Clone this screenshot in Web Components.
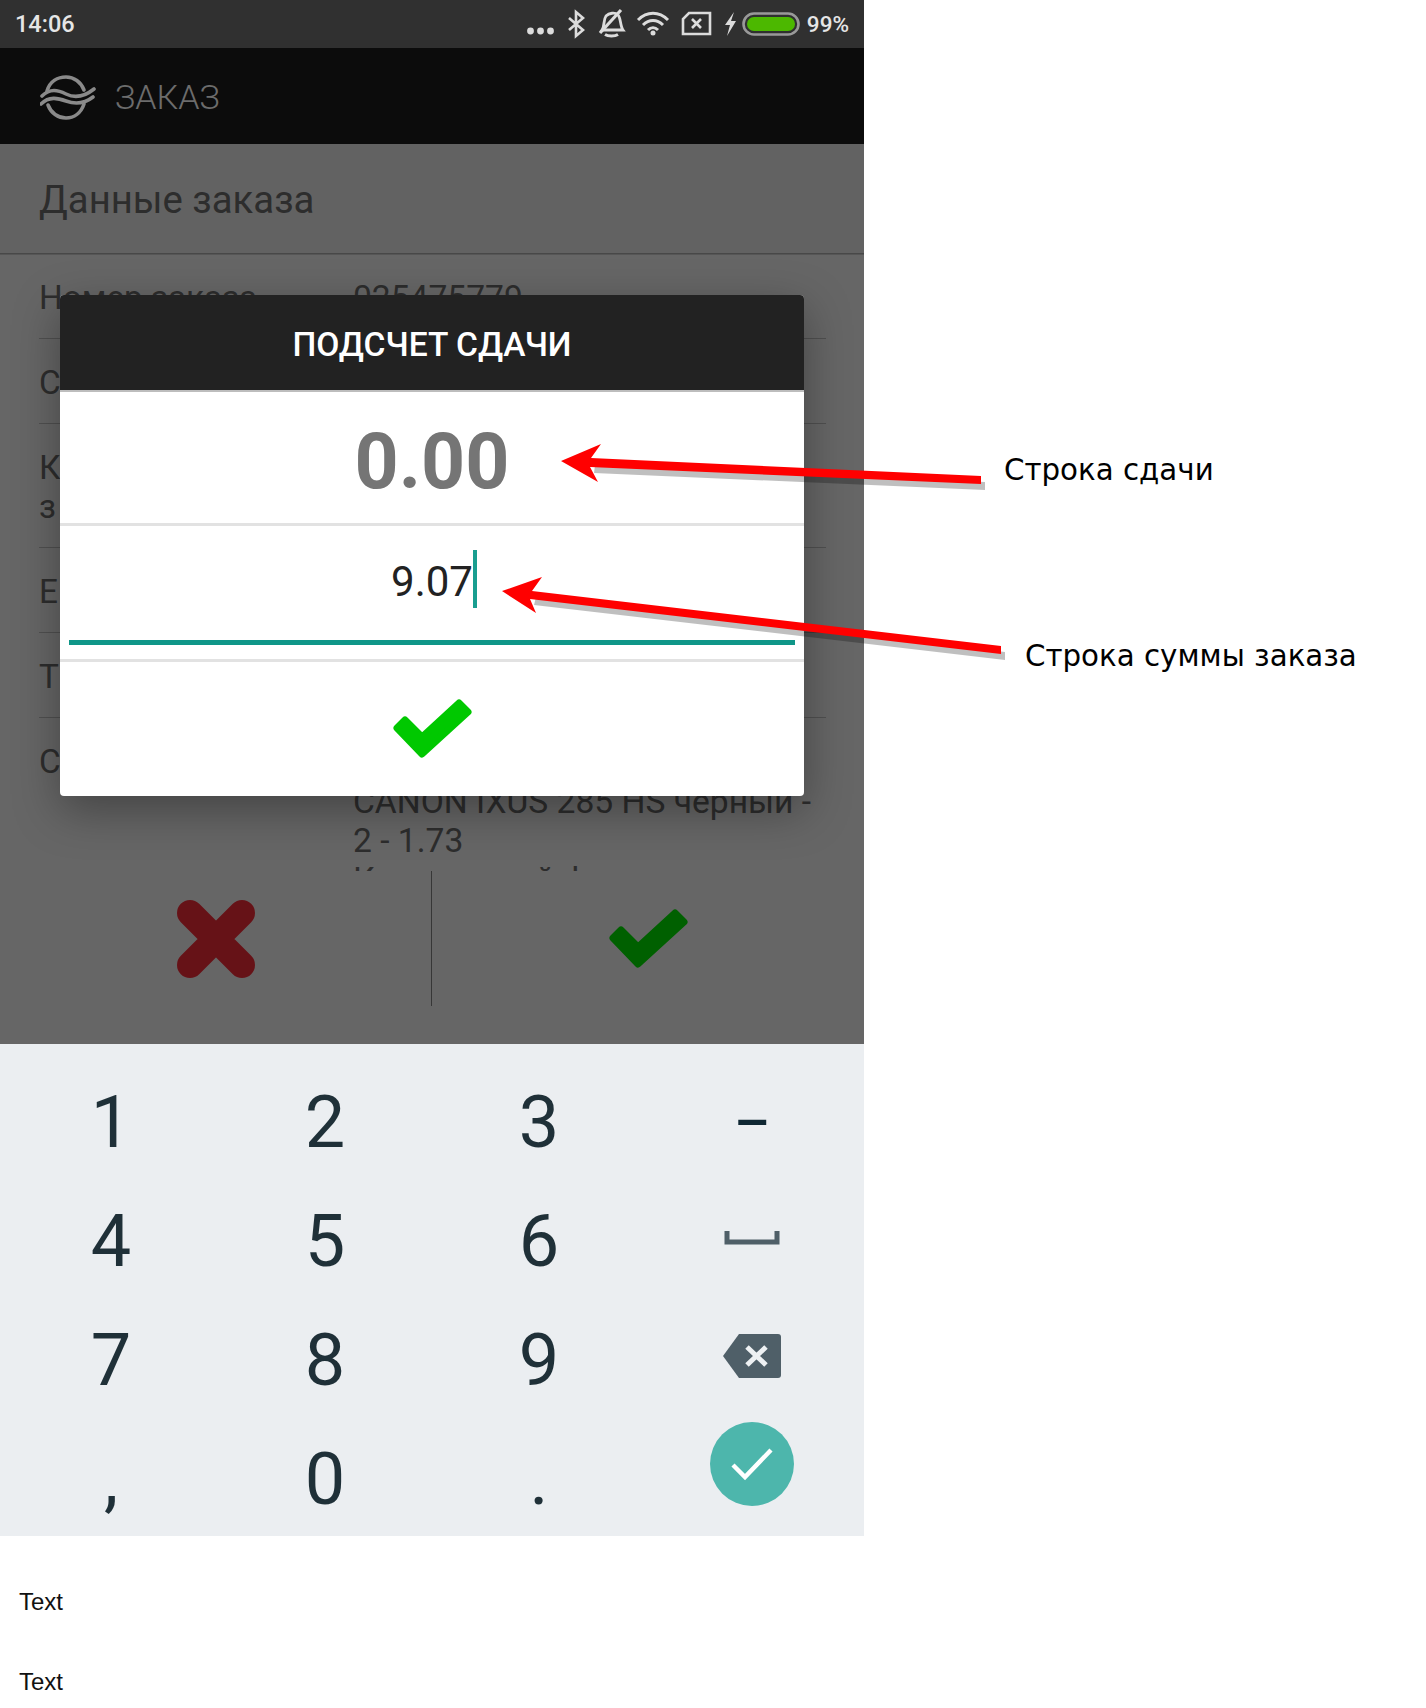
<!DOCTYPE html>
<html lang="ru">
<head>
<meta charset="utf-8">
<title>Подсчет сдачи</title>
<style>
    html, body { margin: 0; background: #fff; font-family: Roboto, sans-serif; }
</style>
</head>
<body>
<help-page>
    <phone-screen>
        <order-row label="Номер заказа">025475779</order-row>
        <order-row label="С"></order-row>
        <order-row label="К<br>з" tall></order-row>
        <order-row label="Е"></order-row>
        <order-row label="Т"></order-row>
        <order-row label="С" last>CANON IXUS 285 HS черный -<br>2 - 1.73<br>Компактный фотоаппарат</order-row>
    </phone-screen>
    <num-keyboard></num-keyboard>
    <arrow-notes></arrow-notes>
    <text-line>Text</text-line>
    <text-line>Text</text-line>
</help-page>

<script>
class HelpPage extends HTMLElement {
    constructor() {
        super();
        this.attachShadow({mode: 'open'}).innerHTML = `
            <style>
                :host { display: block; position: relative; width: 1426px; height: 1708px; overflow: hidden; }
            </style>
            <slot></slot>
        `;
    }
}

class StatusBar extends HTMLElement {
    constructor() {
        super();
        this.attachShadow({mode: 'open'}).innerHTML = `
            <style>
                :host { display: flex; align-items: center; justify-content: space-between; height: 48px; box-sizing: border-box; padding: 0 15px 0 15px; background: #303030; color: #e6e6e6; font: 500 23.5px Roboto, sans-serif; }
                .icons { display: flex; align-items: center; }
                svg { display: block; }
                .pct { font-size: 22.5px; margin-left: -2px; }
            </style>
            <span>14:06</span>
            <div class="icons">
                <svg width="286" height="48" viewBox="527 0 286 48" fill="none" stroke="#dcdcdc" stroke-width="2.6">
                    <g transform="translate(4 0)">
                        <g fill="#dcdcdc" stroke="none"><circle cx="530.5" cy="31" r="3.4"/><circle cx="540.5" cy="31" r="3.4"/><circle cx="550.5" cy="31" r="3.4"/></g>
                        <path d="M569 18l14 12-7 6V12l7 6-14 12"/>
                        <path d="M602 30c3-4 1-10 4-14 3-3 9-4 12-1 3 3 2 11 5 15zM605 34.5c3 2 10 2 13 0" stroke-width="2.8"/>
                        <path d="M600 33L621 10" stroke-width="3.2"/>
                        <path d="M638 20c9-9 21-9 30 0M643 25c6-6 14-6 20 0M648 30c3-3 7-3 10 0" stroke-width="3"/>
                        <circle cx="653" cy="33" r="2.5" fill="#dcdcdc" stroke="none"/>
                        <path d="M689 13h21v21h-27V19z"/>
                        <path d="M692 19l9 9M701 19l-9 9"/>
                        <path d="M734 12l-9 13h5l-3 11 9-15h-5z" fill="#dcdcdc" stroke="none"/>
                        <rect x="743.5" y="13.5" width="55" height="21" rx="10.5" stroke="#999"/>
                        <rect x="747" y="17" width="48" height="14" rx="7" fill="#4cb800" stroke="none"/>
                    </g>
                </svg>
                <span class="pct">99%</span>
            </div>
        `;
    }
}

class AppBar extends HTMLElement {
    constructor() {
        super();
        this.attachShadow({mode: 'open'}).innerHTML = `
            <style>
                :host { display: flex; align-items: center; gap: 19px; height: 96px; box-sizing: border-box; padding: 1px 0 0 40px; background: #0c0c0c; color: #6c6c6c; font: 300 34px Roboto, sans-serif; }
                svg { display: block; }
            </style>
            <svg width="56" height="46" viewBox="0 0 56 46" fill="none" stroke="#8a8a8a" stroke-width="3.6" stroke-linecap="round">
                <path d="M7 17C10 7 18 3 26 3s15 5 18 13"/>
                <path d="M2 22C10 14 18 16 26 20s18 3 28-5"/>
                <path d="M1 30C9 22 18 24 26 27s18 3 27-4"/>
                <path d="M8 31C11 39 18 44 26 44s15-5 18-14"/>
            </svg>
            <span>ЗАКАЗ</span>
        `;
    }
}

class PhoneScreen extends HTMLElement {
    constructor() {
        super();
        this.attachShadow({mode: 'open'}).innerHTML = `
            <style>
                :host { display: block; width: 864px; }
                .body { position: relative; height: 900px; display: flex; flex-direction: column; background: #fff; color: #707070; }
                h1 { flex: none; margin: 0; height: 109px; padding-left: 39px; font: 400 38.3px/111px Roboto, sans-serif; border-bottom: 1px solid #b4b4b4; box-shadow: 0 1px 0 #d8d8d8; background: #f6f6f6; color: #707070; }
                .rows { flex: 1; min-height: 0; overflow: hidden; padding: 0 38px 0 39px; }
                .actions { flex: none; height: 173px; box-sizing: border-box; padding-bottom: 38px; display: flex; }
                .actions div { flex: 1; display: flex; align-items: center; justify-content: center; }
                .actions div:first-child { flex: none; width: 431px; }
                .actions div + div { border-left: 1px solid #8a8a8a; }
                svg { display: block; }
                .scrim { position: absolute; inset: 0; background: rgba(0,0,0,.6); }
                change-dialog { position: absolute; left: 60px; top: 151px; }
            </style>
            <status-bar></status-bar>
            <app-bar></app-bar>
            <div class="body">
                <h1>Данные заказа</h1>
                <div class="rows"><slot></slot></div>
                <div class="actions">
                    <div>
                        <svg width="78" height="78" viewBox="0 0 78 78" fill="none" stroke="#ff2f3a" stroke-width="26" stroke-linecap="round">
                            <path d="M13 13l52 52M65 13L13 65"/>
                        </svg>
                    </div>
                    <div>
                        <svg width="80" height="62" viewBox="0 0 80 62" fill="#00f000" stroke="#00f000" stroke-width="7" stroke-linejoin="round">
                            <path d="M5 30l8-8 17 17L67 5l9 9-46 42z"/>
                        </svg>
                    </div>
                </div>
                <div class="scrim"></div>
                <change-dialog></change-dialog>
            </div>
        `;
    }
}

class OrderRow extends HTMLElement {
    constructor() {
        super();
        this.attachShadow({mode: 'open'});
    }

    connectedCallback() {
        const last = this.hasAttribute('last');
        this.shadowRoot.innerHTML = `
            <style>
                :host { display: grid; grid-template-columns: 314px 1fr; box-sizing: border-box; padding: 24px 0 21px; font: 400 33.3px/39px Roboto, sans-serif; white-space: nowrap; border-bottom: 1px solid #c8c8c8; }
                :host([last]) { border-bottom: 0; }
                .value { font-size: 33.6px; ${last ? 'margin-top: 40px;' : ''} }
            </style>
            <div>${this.getAttribute('label')}</div>
            <div class="value"><slot></slot></div>
        `;
    }
}

class ChangeDialog extends HTMLElement {
    constructor() {
        super();
        this.attachShadow({mode: 'open'}).innerHTML = `
            <style>
                :host { display: block; width: 744px; height: 501px; background: #fff; border-radius: 4px; box-shadow: 0 14px 46px rgba(0,0,0,.34); overflow: hidden; font-family: Roboto, sans-serif; }
                header { height: 95px; line-height: 100px; background: #222; color: #fff; text-align: center; font-size: 33.6px; font-weight: 500; border-bottom: 2px solid #bdbdbd; }
                .change { height: 134px; box-sizing: border-box; padding-top: 9px; display: flex; align-items: center; justify-content: center; color: #757575; font-size: 77px; font-weight: 700; border-bottom: 3px solid #e2e2e2; }
                .sum { height: 136px; box-sizing: border-box; padding: 0 9px; border-bottom: 3px solid #e2e2e2; }
                .field { height: 119px; box-sizing: border-box; padding-left: 4px; display: flex; justify-content: center; border-bottom: 5px solid #0f9688; }
                .field span { font-size: 42px; line-height: 111px; color: #222; }
                .caret { width: 4px; height: 58px; margin-top: 24px; background: #199e90; }
                .ok { display: flex; justify-content: center; padding-top: 36px; }
                svg { display: block; }
            </style>
            <header>ПОДСЧЕТ СДАЧИ</header>
            <div class="change">0.00</div>
            <div class="sum">
                <div class="field"><span>9.07</span><div class="caret"></div></div>
            </div>
            <div class="ok">
                <svg width="80" height="62" viewBox="0 0 80 62" fill="#00c800" stroke="#00c800" stroke-width="7" stroke-linejoin="round">
                    <path d="M5 30l8-8 17 17L67 5l9 9-46 42z"/>
                </svg>
            </div>
        `;
    }
}

class NumKeyboard extends HTMLElement {
    constructor() {
        super();
        const keys = ['1', '2', '3', '<span class="dash">–</span>',
            '4', '5', '6', `<svg class="space" width="56" height="14" viewBox="0 0 56 14" fill="none" stroke="#4f5f68" stroke-width="5"><path d="M3 0v11h50V0"/></svg>`,
            '7', '8', '9', `<svg class="back" width="60" height="46" viewBox="0 0 60 46"><path d="M17 1h39q3 0 3 3v38q0 3-3 3H17L1 23z" fill="#4f5f68"/><path d="M25 14l19 18M44 14L25 32" stroke="#eef1f3" stroke-width="5" fill="none"/></svg>`,
            ',', '0', '.', `<div class="go"><svg width="42" height="34" viewBox="0 0 42 34" fill="none" stroke="#fff" stroke-width="4.4"><path d="M2 18l12 12L40 3"/></svg></div>`];
        this.attachShadow({mode: 'open'}).innerHTML = `
            <style>
                :host { display: grid; grid-template-columns: repeat(4, 214px); grid-auto-rows: 119px; box-sizing: border-box; width: 864px; height: 492px; padding: 19px 4px 0; background: #ebeef1; color: #1f3038; font: 400 72px Roboto, sans-serif; overflow: hidden; }
                .key { display: flex; align-items: center; justify-content: center; }
                .dash { font-size: 56px; font-weight: 500; color: #0f2733; margin-left: -2px; }
                .go { flex: none; width: 84px; height: 84px; margin: -31px 0 0 -2px; border-radius: 50%; background: #4db6ac; display: flex; align-items: center; justify-content: center; }
                .space { margin-top: -7px; margin-left: -2px; }
                .back { margin-top: -9px; margin-left: -2px; }
                svg { display: block; }
            </style>
            ${keys.map(k => `<div class="key">${k}</div>`).join('')}
        `;
    }
}

class ArrowNotes extends HTMLElement {
    constructor() {
        super();
        this.attachShadow({mode: 'open'}).innerHTML = `
            <style>
                :host { position: absolute; inset: 0; display: block; pointer-events: none; }
                svg { position: absolute; left: 0; top: 0; }
                span { position: absolute; font: 400 29.3px "DejaVu Sans", sans-serif; color: #000; white-space: nowrap; }
            </style>
            <svg width="1426" height="1708" viewBox="0 0 1426 1708">
                <g fill="#000" fill-opacity=".25" transform="translate(4 6)">
                    <path d="M591 459L981 476V484L590 467z"/>
                    <path d="M532 591L1001 646V654L530 599z"/>
                </g>
                <g fill="#ff0000">
                    <path d="M561 461L601 444 591 458 981 476V484L590 467 598 482z"/>
                    <path d="M502 591L542 577 532 591 1001 646V654L530 599 536 613z"/>
                </g>
            </svg>
            <span style="left: 1004px; top: 453px;">Строка сдачи</span>
            <span style="left: 1025px; top: 639px;">Строка суммы заказа</span>
        `;
    }
}

class TextLine extends HTMLElement {
    constructor() {
        super();
        this.attachShadow({mode: 'open'}).innerHTML = `
            <style>
                :host { display: block; padding: 0 0 0 19px; height: 80px; font: 400 24px/80px "Liberation Sans", Arial, sans-serif; color: #111; }
                :host(:first-of-type) { margin-top: 26px; }
            </style>
            <slot></slot>
        `;
    }
}

customElements.define('help-page', HelpPage);
customElements.define('status-bar', StatusBar);
customElements.define('app-bar', AppBar);
customElements.define('phone-screen', PhoneScreen);
customElements.define('order-row', OrderRow);
customElements.define('change-dialog', ChangeDialog);
customElements.define('num-keyboard', NumKeyboard);
customElements.define('arrow-notes', ArrowNotes);
customElements.define('text-line', TextLine);
</script>
</body>
</html>
